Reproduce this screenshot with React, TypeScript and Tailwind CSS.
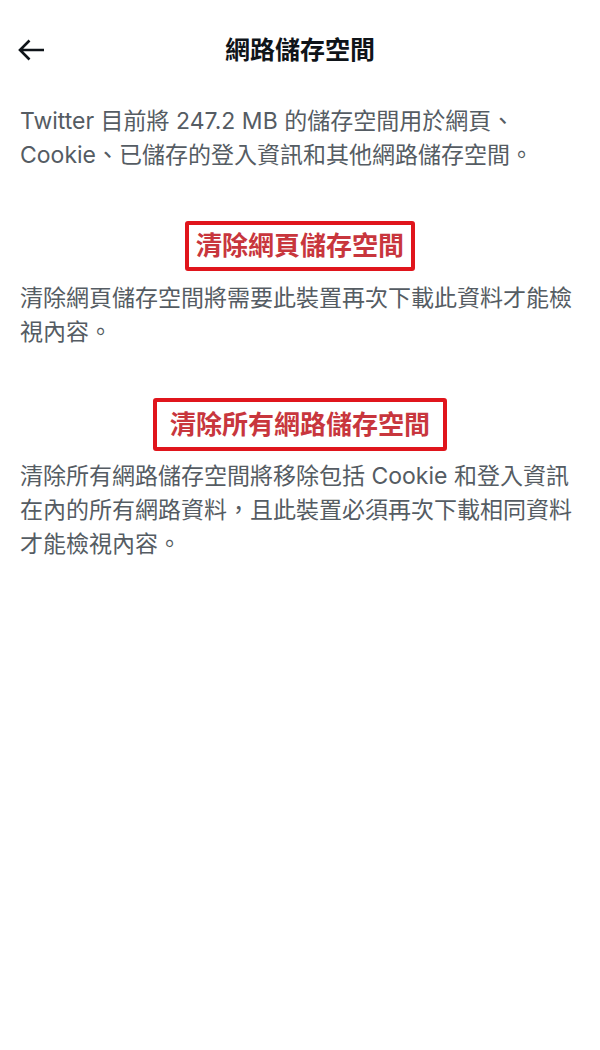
import React from "react";

const font = { fontFamily: 'Inter, "Noto Sans CJK TC", sans-serif' };

export default function App() {
  return (
    <div
      className="w-[600px] min-h-[1050px] bg-white"
      style={font}
    >
      <div className="h-[100px] grid grid-cols-[80px_1fr_80px] items-center">
        <div className="pl-[17px] flex items-center">
          <svg width="28" height="24" viewBox="0 0 28 24" fill="none">
            <path
              d="M27 12H3.5M12.5 2.5L3 12l9.5 9.5"
              stroke="#0f1419"
              strokeWidth="2.6"
              strokeLinecap="butt"
              strokeLinejoin="miter"
            />
          </svg>
        </div>
        <h1 className="text-center text-[25px] font-bold text-[#0f1419] leading-none">
          網路儲存空間
        </h1>
        <div />
      </div>

      <div className="px-[20px]">
        <p className="mt-[4px] text-[23px] leading-[34px] text-[#555c63]">
          Twitter 目前將 247.2 MB 的儲存空間用於網頁、Cookie、已儲存的登入資訊和其他網路儲存空間。
        </p>

        <div className="mt-[49px] flex justify-center">
          <div className="w-[230px] h-[50px] border-4 border-[#e0151c] rounded-[3px] flex items-center justify-center">
            <span className="text-[26px] font-bold text-[#c8363d] leading-none tracking-[0px]">
              清除網頁儲存空間
            </span>
          </div>
        </div>

        <p className="mt-[10px] text-[23px] leading-[34px] text-[#555c63]">
          清除網頁儲存空間將需要此裝置再次下載此資料才能檢視內容。
        </p>

        <div className="mt-[49px] flex justify-center">
          <div className="w-[294px] h-[53px] border-4 border-[#e0151c] rounded-[3px] flex items-center justify-center">
            <span className="text-[26px] font-bold text-[#c8363d] leading-none">
              清除所有網路儲存空間
            </span>
          </div>
        </div>

        <p className="mt-[8px] text-[23px] leading-[34px] text-[#555c63]">
          清除所有網路儲存空間將移除包括 Cookie 和登入資訊在內的所有網路資料，且此裝置必須再次下載相同資料才能檢視內容。
        </p>
      </div>
    </div>
  );
}
